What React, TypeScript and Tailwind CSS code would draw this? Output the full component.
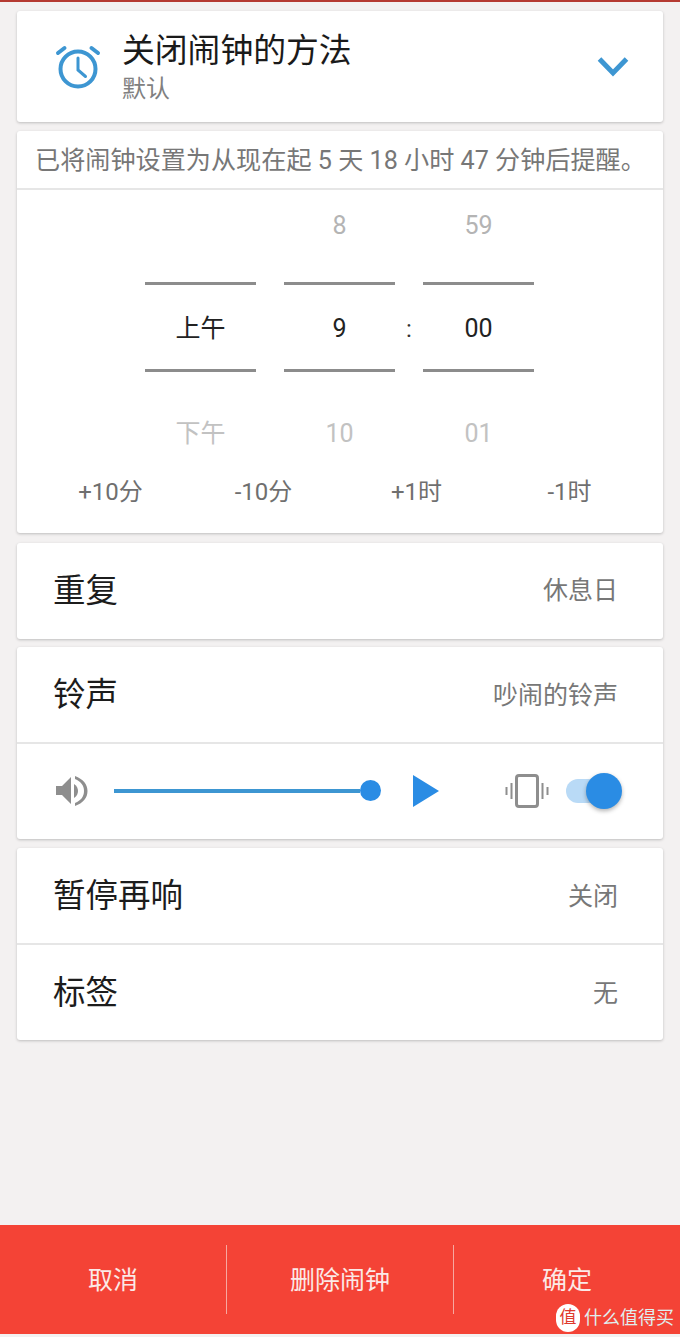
import React from "react";

// ========== Constants ==========

const PICKER_COLUMNS = [
  { prev: "", current: "上午", next: "下午" },
  { prev: "8", current: "9", next: "10" },
  { prev: "59", current: "00", next: "01" },
];

const QUICK_ACTIONS = ["+10分", "-10分", "+1时", "-1时"];

const FONT = "font-['Roboto','Noto_Sans_CJK_SC',sans-serif]";

// ========== Icons ==========

function AlarmIcon() {
  return (
    <svg width="48" height="48" viewBox="0 0 48 48" fill="none" stroke="#3d96d2" strokeLinecap="round">
      <circle cx="24" cy="26" r="17.5" strokeWidth="4" />
      <path d="M24 15v12l7.5 6.5" strokeWidth="3" />
      <path d="M4 10 10.500 5M44 10 37.500 5" strokeWidth="4" />
    </svg>
  );
}

function SpeakerIcon() {
  return (
    <svg width="36" height="36" viewBox="0 0 36 36" fill="#8e8e8e">
      <path d="M2 13h6l9-9v27l-9-9H2z" />
      <path d="M20 11c3 2 4 4.500 4 7s-1 5-4 7z" />
      <path d="M21 3v3c6 2.500 9 6.500 9 12s-3 9.500-9 12v3c8-3 12.500-8 12.500-15S29 6 21 3z" />
    </svg>
  );
}

function VibrateIcon() {
  return (
    <svg width="44" height="36" viewBox="0 0 44 36" fill="none" stroke="#8e8e8e">
      <rect x="11.500" y="2.500" width="21" height="31" rx="2.500" strokeWidth="3" />
      <path d="M6.500 10v16M37.500 10v16" strokeWidth="2" />
      <path d="M1.500 14v8M42.500 14v8" strokeWidth="2" />
    </svg>
  );
}

// ========== Parts ==========

function Card({ children, className = "" }: { children: React.ReactNode; className?: string }) {
  return (
    <div className={`bg-white rounded-[3px] shadow-[0_1px_3px_rgba(0,0,0,0.22)] ${className}`}>{children}</div>
  );
}

function SettingRow({ label, value, className = "" }: { label: string; value: string; className?: string }) {
  return (
    <div className={`pl-[36px] pr-[45px] flex items-center justify-between ${className}`}>
      <span className="text-[32.500px] text-[#1c1c1c]">{label}</span>
      <span className="text-[25px] text-[#777777]">{value}</span>
    </div>
  );
}

function PickerColumn({ prev, current, next }: { prev: string; current: string; next: string }) {
  return (
    <div className="w-[111px] flex flex-col items-center">
      <div className="h-[92px] pb-[21px] w-full flex items-center justify-center text-[25px] text-[#b4b4b4]">{prev}</div>
      <div className="h-[90px] pt-[3px] w-full flex items-center justify-center text-[25px] text-[#222222] border-y-[3px] border-[#8c8c8c]">
        {current}
      </div>
      <div className="h-[93px] pt-[30px] w-full flex items-center justify-center text-[25px] text-[#c2c2c2]">{next}</div>
    </div>
  );
}

// ========== Main Component ==========

export default function App() {
  return (
    <div className={`relative w-[680px] h-[1337px] bg-[#f3f1f1] flex flex-col overflow-hidden ${FONT}`}>
      <div className="h-[2px] bg-[#b53a32] shrink-0" />

      <div className="flex-1 px-[17px] pt-[9px] flex flex-col">
        <Card className="h-[111px] pl-[37px] pr-[33px] flex items-center">
          <AlarmIcon />
          <div className="ml-[20px] flex-1 flex flex-col">
            <span className="text-[32.800px] leading-[44px] text-[#1a1a1a]">关闭闹钟的方法</span>
            <span className="text-[24px] leading-[32px] text-[#808080]">默认</span>
          </div>
          <svg width="34" height="24" viewBox="0 0 34 24" fill="none" stroke="#3d96d2" strokeWidth="5">
            <path d="M3.500 4 17 18 30.500 4" />
          </svg>
        </Card>

        <Card className="mt-[9px] h-[402px]">
          <div className="h-[59px] pl-[18px] pt-[3px] flex items-center border-b-2 border-[#e6e6e6] text-[25.150px] text-[#777777] whitespace-nowrap">
            已将闹钟设置为从现在起 5 天 18 小时 47 分钟后提醒。
          </div>
          <div className="pr-[1px] flex justify-center">
            <PickerColumn {...PICKER_COLUMNS[0]} />
            <div className="w-[28px]" />
            <PickerColumn {...PICKER_COLUMNS[1]} />
            <div className="w-[28px] h-[277px] flex items-center justify-center text-[24px] text-[#333333]">:</div>
            <PickerColumn {...PICKER_COLUMNS[2]} />
          </div>
          <div className="mt-[9px] px-[17px] grid grid-cols-4">
            {QUICK_ACTIONS.map((action) => (
              <span key={action} className="text-center text-[24px] leading-[32px] text-[#6f6f6f]">
                {action}
              </span>
            ))}
          </div>
        </Card>

        <Card className="mt-[10px]">
          <SettingRow label="重复" value="休息日" className="h-[96px]" />
        </Card>

        <Card className="mt-[8px]">
          <SettingRow label="铃声" value="吵闹的铃声" className="h-[97px] pt-[2px] border-b-2 border-[#e6e6e6]" />
          <div className="h-[95px] pl-[37px] pr-[38px] pb-[2px] flex items-center">
            <SpeakerIcon />
            <div className="ml-[24px] w-[267px] flex items-center">
              <div className="flex-1 h-[4px] bg-[#3d96d2]" />
              <div className="w-[21px] h-[21px] rounded-full bg-[#2a8ce4]" />
            </div>
            <svg className="ml-[32px]" width="26" height="32" viewBox="0 0 26 32" fill="#2a8ce4">
              <path d="M0 0 26 16 0 32z" />
            </svg>
            <div className="ml-[66px]">
              <VibrateIcon />
            </div>
            <div className="relative ml-[17px] w-[56px] h-[36px] flex items-center">
              <div className="w-[40px] h-[24px] rounded-full bg-[#b9daf6]" />
              <div className="absolute right-0 w-[36px] h-[36px] rounded-full bg-[#2a8ce4] shadow-[0_2px_4px_rgba(0,0,0,0.3)]" />
            </div>
          </div>
        </Card>

        <Card className="mt-[9px]">
          <SettingRow label="暂停再响" value="关闭" className="h-[97px] pt-[2px] border-b-2 border-[#e6e6e6]" />
          <SettingRow label="标签" value="无" className="h-[95px] pt-[2px]" />
        </Card>
      </div>

      <div className="h-[109px] mb-[3px] bg-[#f44336] flex items-center shrink-0">
        <div className="w-[226px] pt-[3px] text-center text-[25px] text-[#fbe9e7]">取消</div>
        <div className="w-[1px] h-[69px] bg-[#f7a8a0]" />
        <div className="w-[226px] pt-[3px] text-center text-[25px] text-[#fbe9e7]">删除闹钟</div>
        <div className="w-[1px] h-[69px] bg-[#f7a8a0]" />
        <div className="flex-1 pt-[3px] text-center text-[25px] text-[#fbe9e7]">确定</div>
      </div>

      {/* 水印 */}
      <div className="absolute right-[6px] bottom-[5px] flex items-center">
        <div className="w-[24px] h-[28px] rounded-full bg-white flex items-center justify-center text-[17px] text-[#e0392d]">值</div>
        <span className="ml-[4px] text-[18px] leading-[26px] text-[#dfeeee]">什么值得买</span>
      </div>
    </div>
  );
}
